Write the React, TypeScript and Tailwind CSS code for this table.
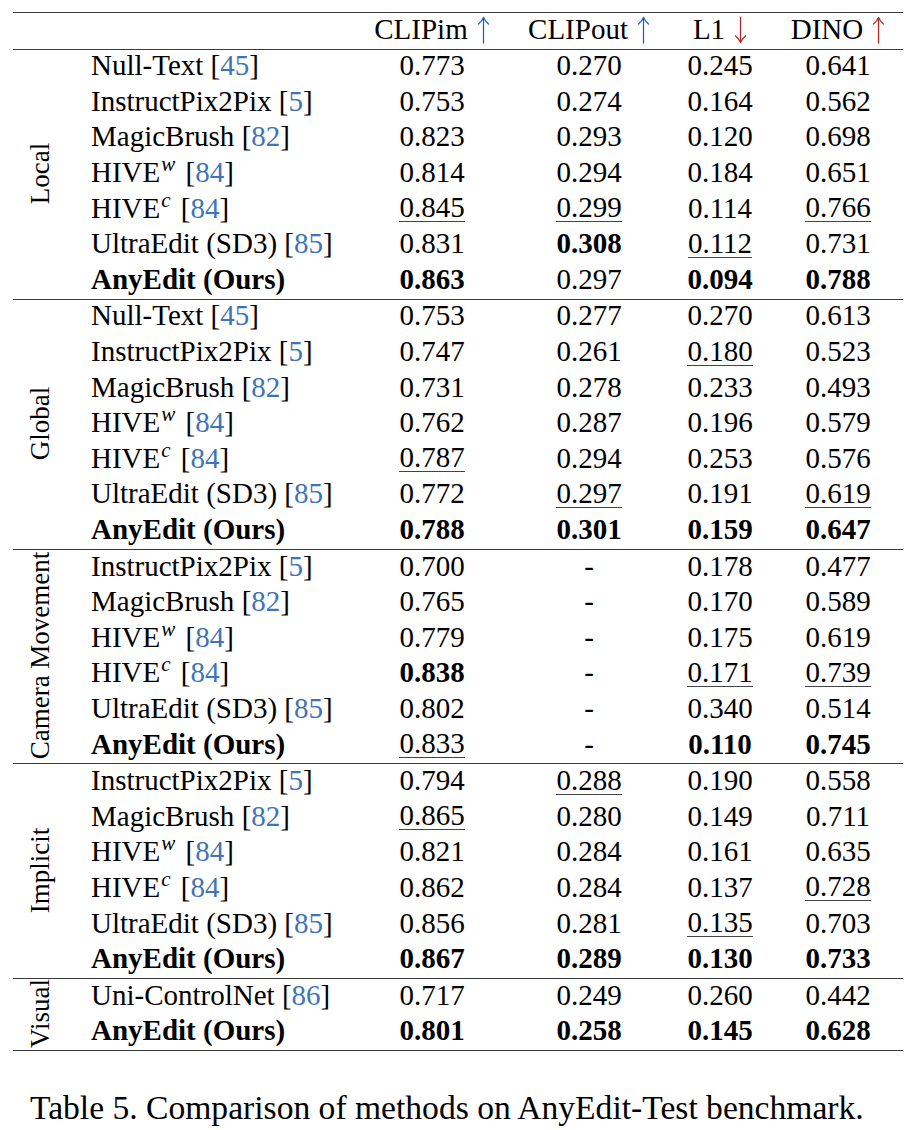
import React from "react";

type Cell = { v: string; b?: boolean; u?: boolean };
type Row = { name: string; sup?: string; cite?: string; ours?: boolean; cells: Cell[] };
type Group = { label: string; rows: Row[] };

const c = (s: string): Cell => {
  let b = false;
  let u = false;
  let v = s;
  if (v.startsWith("*")) {
    b = true;
    v = v.slice(1);
  }
  if (v.startsWith("_")) {
    u = true;
    v = v.slice(1);
  }
  return { v, b, u };
};

const r = (name: string, cite: string | undefined, vals: string[], sup?: string): Row => ({
  name,
  cite,
  sup,
  cells: vals.map(c),
});
const ours = (vals: string[]): Row => ({ name: "AnyEdit (Ours)", ours: true, cells: vals.map(c) });

const groups: Group[] = [
  {
    label: "Local",
    rows: [
      r("Null-Text", "45", ["0.773", "0.270", "0.245", "0.641"]),
      r("InstructPix2Pix", "5", ["0.753", "0.274", "0.164", "0.562"]),
      r("MagicBrush", "82", ["0.823", "0.293", "0.120", "0.698"]),
      r("HIVE", "84", ["0.814", "0.294", "0.184", "0.651"], "w"),
      r("HIVE", "84", ["_0.845", "_0.299", "0.114", "_0.766"], "c"),
      r("UltraEdit (SD3)", "85", ["0.831", "*0.308", "_0.112", "0.731"]),
      ours(["*0.863", "0.297", "*0.094", "*0.788"]),
    ],
  },
  {
    label: "Global",
    rows: [
      r("Null-Text", "45", ["0.753", "0.277", "0.270", "0.613"]),
      r("InstructPix2Pix", "5", ["0.747", "0.261", "_0.180", "0.523"]),
      r("MagicBrush", "82", ["0.731", "0.278", "0.233", "0.493"]),
      r("HIVE", "84", ["0.762", "0.287", "0.196", "0.579"], "w"),
      r("HIVE", "84", ["_0.787", "0.294", "0.253", "0.576"], "c"),
      r("UltraEdit (SD3)", "85", ["0.772", "_0.297", "0.191", "_0.619"]),
      ours(["*0.788", "*0.301", "*0.159", "*0.647"]),
    ],
  },
  {
    label: "Camera Movement",
    rows: [
      r("InstructPix2Pix", "5", ["0.700", "-", "0.178", "0.477"]),
      r("MagicBrush", "82", ["0.765", "-", "0.170", "0.589"]),
      r("HIVE", "84", ["0.779", "-", "0.175", "0.619"], "w"),
      r("HIVE", "84", ["*0.838", "-", "_0.171", "_0.739"], "c"),
      r("UltraEdit (SD3)", "85", ["0.802", "-", "0.340", "0.514"]),
      ours(["_0.833", "-", "*0.110", "*0.745"]),
    ],
  },
  {
    label: "Implicit",
    rows: [
      r("InstructPix2Pix", "5", ["0.794", "_0.288", "0.190", "0.558"]),
      r("MagicBrush", "82", ["_0.865", "0.280", "0.149", "0.711"]),
      r("HIVE", "84", ["0.821", "0.284", "0.161", "0.635"], "w"),
      r("HIVE", "84", ["0.862", "0.284", "0.137", "_0.728"], "c"),
      r("UltraEdit (SD3)", "85", ["0.856", "0.281", "_0.135", "0.703"]),
      ours(["*0.867", "*0.289", "*0.130", "*0.733"]),
    ],
  },
  {
    label: "Visual",
    rows: [
      r("Uni-ControlNet", "86", ["0.717", "0.249", "0.260", "0.442"]),
      ours(["*0.801", "*0.258", "*0.145", "*0.628"]),
    ],
  },
];

const COLS = "grid grid-cols-[307px_114px_200px_62px_152px]";
const cellPad = ["", "", "", "", "pl-[22px]"];

function Value({ cell }: { cell: Cell }) {
  return (
    <span
      className={`${cell.b ? "font-bold" : ""} ${
        cell.u ? "border-b-[1.5px] border-[#444] leading-[27px]" : ""
      }`}
    >
      {cell.v}
    </span>
  );
}

function MethodName({ row }: { row: Row }) {
  if (row.ours) return <span className="font-bold">AnyEdit (Ours)</span>;
  return (
    <span>
      {row.name}
      {row.sup && (
        <span className="text-[21px] italic relative -top-[11px] ml-[1px] mr-[3px]">{row.sup}</span>
      )}{" "}
      [<span className="text-[#3f74b8]">{row.cite}</span>]
    </span>
  );
}

function GroupBlock({ g }: { g: Group }) {
  return (
    <div className="flex border-t border-[#3a3a3a]">
      <div className="w-[55px] flex items-center justify-center">
        <span className="-rotate-90 whitespace-nowrap text-[27px] leading-none block pl-[2px]">{g.label}</span>
      </div>
      <div className="flex flex-col">
        {g.rows.map((row, i) => (
          <div key={i} className={`${COLS} h-[35.6px] items-center`}>
            <div className="pl-[23px] whitespace-nowrap -mt-[3px]">
              <MethodName row={row} />
            </div>
            {row.cells.map((cell, j) => (
              <div key={j} className={`flex justify-center whitespace-nowrap -mt-[3px] ${cellPad[j + 1]}`}>
                <Value cell={cell} />
              </div>
            ))}
          </div>
        ))}
      </div>
    </div>
  );
}

function Arrow({ up, color }: { up: boolean; color: string }) {
  return (
    <svg
      width="13"
      height="28"
      viewBox="0 0 13 28"
      className={`${color} ml-[9px] mt-[1px] shrink-0`}
      fill="none"
      stroke="currentColor"
      strokeWidth="1.25"
      strokeLinecap="round"
      strokeLinejoin="round"
    >
      {up ? (
        <>
          <path d="M6.5 2 V27" />
          <path d="M1.5 8 Q5 5 6.5 1.5 Q8 5 11.5 8" />
        </>
      ) : (
        <>
          <path d="M6.5 1 V26" />
          <path d="M1.5 20 Q5 23 6.5 26.5 Q8 23 11.5 20" />
        </>
      )}
    </svg>
  );
}

export default function App() {
  return (
    <div className="w-[921px] h-[1130px] bg-white text-black text-[29px] leading-none font-['Liberation_Serif','Times_New_Roman',serif]">
      <div className="pt-[12px] pl-[13px]">
        <div className="w-[890px] border-t-[1.5px] border-b border-[#3a3a3a]">
          <div className="flex h-[35.5px] items-center">
            <div className="w-[55px]" />
            <div className={`${COLS} -mt-[2px]`}>
              <div />
              <div className="flex justify-center items-center whitespace-nowrap">
                CLIPim
                <Arrow up color="text-[#1a5fb4]" />
              </div>
              <div className="flex justify-center items-center whitespace-nowrap">
                CLIPout
                <Arrow up color="text-[#1a5fb4]" />
              </div>
              <div className="flex justify-center items-center whitespace-nowrap">
                L1
                <Arrow up={false} color="text-[#b3261e]" />
              </div>
              <div className="flex justify-center items-center whitespace-nowrap pl-[22px]">
                DINO
                <Arrow up color="text-[#b3261e]" />
              </div>
            </div>
          </div>
          {groups.map((g) => (
            <GroupBlock key={g.label} g={g} />
          ))}
        </div>
        <div className="mt-[40px] pl-[17px] text-[33.6px] whitespace-nowrap">
          Table 5. Comparison of methods on AnyEdit-Test benchmark.
        </div>
      </div>
    </div>
  );
}
